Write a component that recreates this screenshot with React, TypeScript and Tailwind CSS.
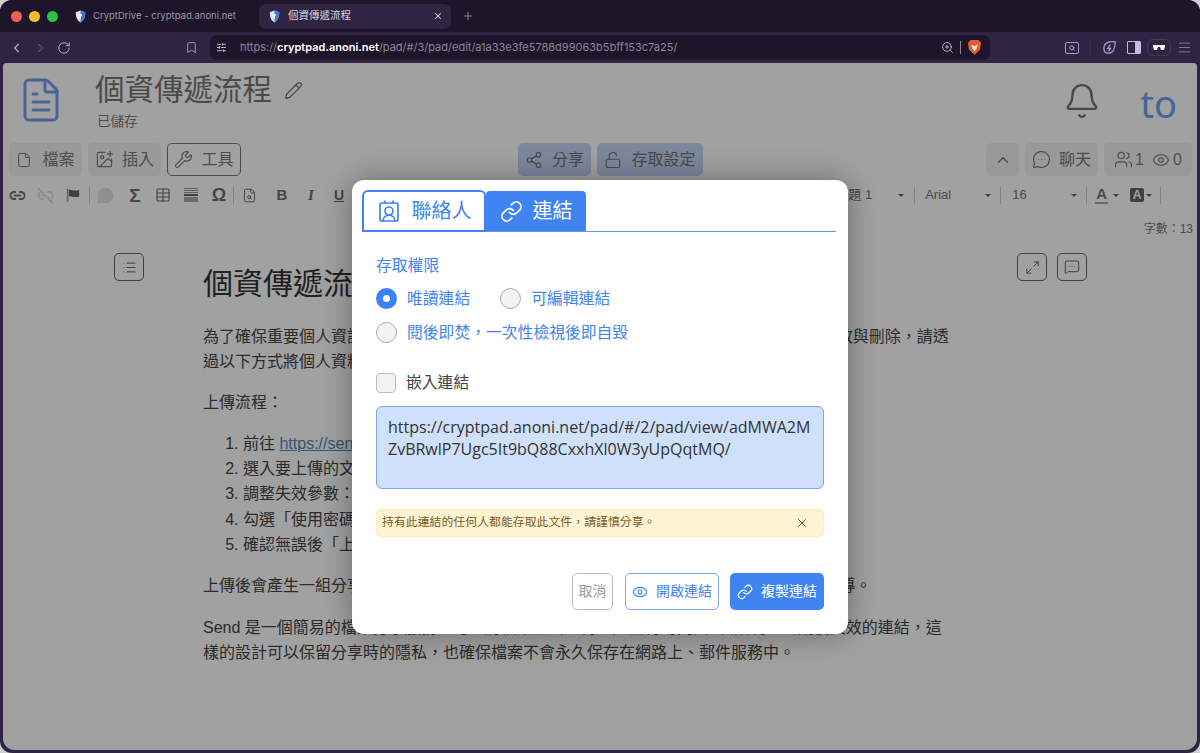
import React from "react";
import {
  ChevronLeft, ChevronRight, RotateCw, Bookmark, SlidersHorizontal, ZoomIn, X, Plus, Menu,
  FileText, Pencil, Bell, File, ImagePlus, Wrench, Share2, LockOpen, ChevronUp, MessageCircleMore,
  Users, Eye, List, Maximize2, MessageSquareMore, Link as LinkIcon, ContactRound, Link2, Link2Off,
  MessageCircle, Table, FileSearch, Search,
} from "lucide-react";

function Shield({ className }: { className?: string }) {
  return (
    <svg viewBox="0 0 14 16" className={className}>
      <path d="M7 0.5 L13 2.5 C13 8 12 12.5 7 15.5 C2 12.5 1 8 1 2.5 Z" fill="#dbe7fb" />
      <path d="M7 0.5 L13 2.5 C13 8 12 12.5 7 15.5 Z" fill="#3f78d8" />
      <circle cx="7" cy="6.5" r="1.6" fill="#fff" />
      <rect x="6.3" y="7" width="1.4" height="4" fill="#fff" />
    </svg>
  );
}

function Brave() {
  return (
    <svg viewBox="0 0 16 18" className="w-[15px] h-[17px]">
      <path d="M4 1 L12 1 L15 4 L14 11 L8 17 L2 11 L1 4 Z" fill="#e2602f" />
      <path d="M4.5 6 L8 7.5 L11.5 6 L10 10.5 L8 13 L6 10.5 Z" fill="#f7e8df" />
    </svg>
  );
}

function ToolBtn({ children, outline, w }: { children: React.ReactNode; outline?: boolean; w: string }) {
  return (
    <div
      className={
        "h-[33px] flex items-center justify-center gap-[8px] rounded-[5px] text-[16px] text-[#7a7a7a] " +
        w +
        " " +
        (outline ? "border border-[#777] bg-transparent" : "bg-[#f3f3f3]")
      }
    >
      {children}
    </div>
  );
}

function BlueBtn({ children, w }: { children: React.ReactNode; w: string }) {
  return (
    <div className={"h-[33px] flex items-center justify-center gap-[9px] rounded-[5px] text-[16px] text-[#757575] bg-[#c6d8f8] " + w}>
      {children}
    </div>
  );
}

function Cell({ children, w = "w-[28px]" }: { children: React.ReactNode; w?: string }) {
  return <div className={"flex justify-center items-center shrink-0 " + w}>{children}</div>;
}

function Sep() {
  return <div className="w-px h-[17px] bg-[#d0d0d0] shrink-0" />;
}

function Caret() {
  return <div className="w-0 h-0 border-x-[3px] border-x-transparent border-t-[3px] border-t-[#666]" />;
}

function Radio({ checked }: { checked?: boolean }) {
  return checked ? (
    <div className="w-[21px] h-[21px] rounded-full bg-[#3b82f6] flex items-center justify-center shrink-0">
      <div className="w-[7px] h-[7px] rounded-full bg-white" />
    </div>
  ) : (
    <div className="w-[21px] h-[21px] rounded-full bg-[#f3f3f3] border border-[#aaa] shrink-0" />
  );
}

export default function App() {
  return (
    <div className="w-[1200px] h-[753px] bg-[#cfcfcf] font-['Liberation_Sans','Noto_Sans_CJK_TC',sans-serif]">
      <div className="w-full h-full rounded-[12px] overflow-hidden bg-[#2f2542] flex flex-col">
        {/* Tab strip */}
        <div className="h-[32px] bg-[#1e152b] flex items-center font-['Inter','Noto_Sans_CJK_TC',sans-serif] shrink-0">
          <div className="flex items-center gap-[7px] pl-[11px] w-[75px]">
            <div className="w-[11px] h-[11px] rounded-full bg-[#ee5f57]" />
            <div className="w-[11px] h-[11px] rounded-full bg-[#f6bd2e]" />
            <div className="w-[11px] h-[11px] rounded-full bg-[#29c13f]" />
          </div>
          <div className="flex items-center gap-[7px] w-[184px]">
            <Shield className="w-[11px] h-[13px]" />
            <span className="text-[9.5px] text-[#9d94ad] whitespace-nowrap">CryptDrive - cryptpad.anoni.net</span>
          </div>
          <div className="w-[192px] h-[25px] rounded-[7px] bg-[#2f2542] flex items-center pl-[10px] pr-[8px] gap-[8px]">
            <Shield className="w-[11px] h-[13px]" />
            <span className="text-[10.5px] text-[#d8d3df] flex-1">個資傳遞流程</span>
            <X className="w-[10px] h-[10px] text-[#d8d3df]" strokeWidth={2.5} />
          </div>
          <Plus className="w-[12px] h-[12px] ml-[11px] text-[#8d8399]" />
        </div>

        {/* Address bar */}
        <div className="h-[31px] flex items-center shrink-0 font-['Inter',sans-serif]">
          <div className="flex items-center gap-[9px] pl-[9px] w-[210px]">
            <ChevronLeft className="w-[15px] h-[18px] text-[#b7b0c2]" strokeWidth={1.8} />
            <ChevronRight className="w-[15px] h-[18px] text-[#5d5470]" strokeWidth={1.8} />
            <RotateCw className="w-[14px] h-[14px] text-[#b7b0c2]" strokeWidth={1.6} />
            <Bookmark className="w-[13px] h-[15px] text-[#b7b0c2] ml-[105px]" strokeWidth={1.5} />
          </div>
          <div className="w-[780px] h-[25px] rounded-[7px] bg-[#1e152b] flex items-center pl-[6px] pr-[8px]">
            <SlidersHorizontal className="w-[11px] h-[11px] text-[#c9c3d3]" />
            <span className="ml-[13px] text-[11px] text-[#8d8399] whitespace-nowrap flex-1">
              https://<span className="text-white font-semibold">cryptpad.anoni.net</span>/pad/#/3/pad/edit/a1a33e3fe5788d99063b5bff153c7a25/
            </span>
            <ZoomIn className="w-[13px] h-[13px] text-[#c9c3d3]" strokeWidth={1.6} />
            <div className="w-px h-[13px] bg-[#8d8399] mx-[6px]" />
            <Brave />
          </div>
          <div className="flex items-center flex-1">
            <div className="ml-[75px] w-[14px] h-[12px] rounded-[2px] border border-[#a99bd0] flex items-center justify-center">
              <Search className="w-[6px] h-[6px] text-[#cfc6e6]" strokeWidth={3} />
            </div>
            <div className="w-px h-[14px] bg-[#3d3354] ml-[11px]" />
            <svg viewBox="0 0 16 16" className="w-[15px] h-[15px] ml-[11px]" fill="none" stroke="#a99bd0" strokeWidth="1.4">
              <path d="M14 2 C8 1 2 3 2 9 C2 12 4 14 7 14 C12 14 14 8 14 2 Z" />
              <path d="M9 5 L6 9 H9 L7 12" />
            </svg>
            <div className="ml-[10px] w-[14px] h-[13px] border border-[#c5b9e6] rounded-[1px] flex justify-end">
              <div className="w-[5px] h-full bg-[#c5b9e6]" />
            </div>
            <div className="ml-[6px] w-[24px] h-[17px] rounded-[6px] border border-[#453a5e] flex items-center justify-center">
              <svg viewBox="0 0 12 6" className="w-[12px] h-[6px]" fill="#fff">
                <path d="M0 0 H12 V1.5 L11 5 H8 L7 2 H5 L4 5 H1 L0 1.5 Z" />
              </svg>
            </div>
            <Menu className="w-[15px] h-[15px] ml-[6px] text-[#8d82a6]" strokeWidth={1.4} />
          </div>
        </div>

        {/* Page */}
        <div className="relative flex-1 mx-[3px] mb-[3px] rounded-t-[4px] rounded-b-[12px] overflow-hidden bg-white flex flex-col">
          {/* Header */}
          <div className="h-[80px] flex shrink-0 relative">
            <div className="w-[92px] pl-[14px] pt-[12px]">
              <FileText className="w-[48px] h-[50px] text-[#72a0ec]" strokeWidth={1.5} />
            </div>
            <div className="flex-1 flex flex-col pt-[8px]">
              <div className="flex items-center h-[38px] text-[29.5px] text-[#767676]">
                個資傳遞流程
                <Pencil className="w-[19px] h-[19px] ml-[12px] text-[#757575]" strokeWidth={1.6} />
              </div>
              <div className="ml-[2px] mt-[3px] text-[13.5px] leading-[20px] text-[#7d7d7d]">已儲存</div>
            </div>
            <div className="flex items-start pt-[15px] pr-[20px] gap-[39px]">
              <Bell className="w-[38px] h-[40px] mt-[3px] text-[#737373]" strokeWidth={1.5} />
              <span className="text-[38px] leading-[50px] text-[#72a0ec] font-['Noto_Sans',sans-serif]">to</span>
            </div>
          </div>

          {/* Main toolbar */}
          <div className="h-[33px] flex items-center px-[6px] shrink-0">
            <div className="flex gap-[6px]">
              <ToolBtn w="w-[73px]"><File className="w-[16px] h-[20px]" strokeWidth={1.5} /><span className="ml-[2px]">檔案</span></ToolBtn>
              <ToolBtn w="w-[73px]"><ImagePlus className="w-[19px] h-[19px]" strokeWidth={1.5} />插入</ToolBtn>
              <ToolBtn outline w="w-[74px]"><Wrench className="w-[19px] h-[19px]" strokeWidth={1.5} />工具</ToolBtn>
            </div>
            <div className="flex gap-[6px] ml-[277px]">
              <BlueBtn w="w-[73px]"><Share2 className="w-[18px] h-[18px]" strokeWidth={1.6} />分享</BlueBtn>
              <BlueBtn w="w-[106px]"><LockOpen className="w-[18px] h-[18px]" strokeWidth={1.6} />存取設定</BlueBtn>
            </div>
            <div className="flex gap-[6px] ml-auto -mr-[1px]">
              <ToolBtn w="w-[33px]"><ChevronUp className="w-[18px] h-[18px]" strokeWidth={2} /></ToolBtn>
              <ToolBtn w="w-[73px]"><MessageCircleMore className="w-[19px] h-[19px]" strokeWidth={1.5} />聊天</ToolBtn>
              <ToolBtn w="w-[88px]">
                <span className="flex items-center gap-[2px]"><Users className="w-[19px] h-[19px]" strokeWidth={1.5} />1</span>
                <span className="flex items-center gap-[3px]"><Eye className="w-[18px] h-[18px]" strokeWidth={1.5} />0</span>
              </ToolBtn>
            </div>
          </div>

          {/* Editor toolbar */}
          <div className="h-[38px] flex items-center justify-between shrink-0 text-[#707070]">
            <div className="flex items-center">
              <Cell><Link2 className="w-[17px] h-[17px]" strokeWidth={2.6} /></Cell>
              <Cell><Link2Off className="w-[17px] h-[17px] text-[#dcdcdc]" strokeWidth={2.4} /></Cell>
              <Cell>
                <svg viewBox="0 0 16 16" className="w-[15px] h-[15px]" fill="#666">
                  <rect x="1" y="1" width="1.5" height="14" fill="#999" />
                  <path d="M3 2 C6 1 8 4 14 2 V9 C8 11 6 8 3 9 Z" />
                </svg>
              </Cell>
              <div className="w-[2px]" />
              <Sep />
              <Cell w="w-[31px]"><MessageCircle className="w-[17px] h-[17px] text-[#e2e2e2]" fill="#e2e2e2" /></Cell>
              <Cell><span className="text-[19px] font-bold leading-none">Σ</span></Cell>
              <Cell><Table className="w-[16px] h-[16px]" strokeWidth={1.8} /></Cell>
              <Cell>
                <div className="w-[14px] flex flex-col gap-[1px]">
                  <div className="h-[1px] bg-[#999]" />
                  <div className="h-[1px] bg-[#999]" />
                  <div className="h-[1px] bg-[#999]" />
                  <div className="h-[2px] bg-[#666]" />
                  <div className="h-[5px] bg-[#aaa]" />
                </div>
              </Cell>
              <Cell><span className="text-[18px] font-bold leading-none">Ω</span></Cell>
              <Sep />
              <Cell w="w-[31px]"><FileSearch className="w-[15px] h-[15px]" strokeWidth={1.6} /></Cell>
              <Cell w="w-[34px]"><span className="text-[15px] font-bold">B</span></Cell>
              <Cell w="w-[24px]"><span className="text-[15px] font-bold italic font-['Liberation_Serif',serif]">I</span></Cell>
              <Cell w="w-[32px]"><span className="text-[14px] font-bold underline">U</span></Cell>
            </div>
            <div className="flex items-center text-[13px] text-[#757575]">
              <span className="whitespace-nowrap">標題 1</span>
              <div className="ml-[26px] mr-[10px]"><Caret /></div>
              <Sep />
              <span className="ml-[10px] w-[60px]">Arial</span>
              <Caret />
              <div className="ml-[9px]"><Sep /></div>
              <span className="ml-[11px] w-[59px]">16</span>
              <Caret />
              <div className="ml-[9px]"><Sep /></div>
              <span className="ml-[8px] font-bold text-[15px] border-b-2 border-[#aaa] leading-[16px] px-[1px]">A</span>
              <div className="ml-[5px]"><Caret /></div>
              <span className="ml-[11px] w-[14px] h-[14px] rounded-[2px] bg-[#666] text-white text-[12px] font-bold flex items-center justify-center">A</span>
              <div className="ml-[2px]"><Caret /></div>
              <div className="ml-[8px] mr-[36px]"><Sep /></div>
            </div>
          </div>

          {/* Word count */}
          <div className="h-[16px] mt-[7px] text-right pr-[4px] text-[12px] leading-[16px] text-[#7a7a7a] shrink-0">字數：13</div>

          {/* Document */}
          <div className="flex items-start pl-[111px] pt-[16px]">
            <div className="w-[30px] h-[28px] rounded-[5px] border border-[#666] flex items-center justify-center shrink-0">
              <List className="w-[15px] h-[15px] text-[#666]" strokeWidth={1.6} />
            </div>
            <div className="ml-[59px] w-[745px] shrink-0 text-[16px] leading-[25.3px] text-[#444] whitespace-nowrap">
              <h1 className="text-[30px] leading-[40px] text-[#333] mb-[20px] mt-[11px]">個資傳遞流程</h1>
              <p className="mb-[15px]">
                為了確保重要個人資訊在傳遞過程中的安全，文件傳送doc後應設定期限，於到期後自動失效與刪除，請透<br />
                過以下方式將個人資料加密後上傳，再分享給對方。
              </p>
              <p className="mb-[16px]">上傳流程：</p>
              <ol className="list-decimal pl-[40px] mb-[16px]">
                <li>前往 <span className="text-[#4f86c0] underline">https://send.example</span></li>
                <li>選入要上傳的文件</li>
                <li>調整失效參數：下載次數與時間</li>
                <li>勾選「使用密碼保護」</li>
                <li>確認無誤後「上傳」</li>
              </ol>
              <p className="mb-[16px]">上傳後會產生一組分享連結與密碼，請將連結與密碼透過 LINE 等管道分別傳給對方，並引導。</p>
              <p>
                Send 是一個簡易的檔案分享服務，可以將檔案加密上傳並產生有時間與3次限制、到期後失效的連結，這<br />
                樣的設計可以保留分享時的隱私，也確保檔案不會永久保存在網路上、郵件服務中。
              </p>
            </div>
            <div className="ml-[69px] flex gap-[10px]">
              <div className="w-[30px] h-[28px] rounded-[5px] border border-[#666] flex items-center justify-center">
                <Maximize2 className="w-[15px] h-[15px] text-[#666]" strokeWidth={1.6} />
              </div>
              <div className="w-[30px] h-[28px] rounded-[5px] border border-[#666] flex items-center justify-center">
                <MessageSquareMore className="w-[16px] h-[16px] text-[#666]" strokeWidth={1.5} />
              </div>
            </div>
          </div>

          {/* Backdrop */}
          <div className="absolute inset-0 bg-black/37" />

          {/* Modal */}
          <div className="absolute left-[349px] top-[117px] w-[496px] h-[454px] bg-white rounded-[12px] shadow-[0_0_30px_rgba(0,0,0,0.35)] px-[10px] pt-[10px] flex flex-col">
            <div className="flex items-end h-[42px] border-b border-[#5f9ae6] mr-[2px] shrink-0">
              <div className="w-[124px] h-[42px] border-2 border-[#3f84f0] rounded-t-[6px] bg-white flex items-center justify-center gap-[11px] text-[20px] text-[#3f84f0] -mb-px">
                <ContactRound className="w-[24px] h-[24px]" strokeWidth={1.7} />
                聯絡人
              </div>
              <div className="w-[100px] h-[40px] bg-[#3f84f0] rounded-t-[4px] flex items-center justify-center gap-[10px] text-[20px] text-white">
                <LinkIcon className="w-[23px] h-[23px]" strokeWidth={1.8} />
                連結
              </div>
            </div>

            <div className="px-[14px] flex flex-col flex-1">
              <div className="mt-[24px] text-[15.8px] leading-[20px] text-[#3f84f0]">存取權限</div>
              <div className="mt-[12px] flex items-center text-[15.8px] leading-[21px] text-[#3f84f0]">
                <Radio checked />
                <span className="ml-[10px]">唯讀連結</span>
                <div className="ml-[30px]"><Radio /></div>
                <span className="ml-[10px]">可編輯連結</span>
              </div>
              <div className="mt-[13px] flex items-center text-[15.8px] leading-[21px] text-[#3f84f0]">
                <Radio />
                <span className="ml-[10px]">閱後即焚，一次性檢視後即自毀</span>
              </div>
              <div className="mt-[29px] flex items-center text-[15.8px] leading-[21px] text-[#444]">
                <div className="w-[20px] h-[20px] rounded-[4px] bg-[#f3f3f3] border border-[#bbb]" />
                <span className="ml-[10px]">嵌入連結</span>
              </div>
              <div className="mt-[13px] h-[83px] rounded-[6px] bg-[#cfe0fb] border border-[#7ba6e8] pl-[11px] pr-[9px] pt-[9px] text-[16px] leading-[22px] text-[#333] break-all font-['Open_Sans',sans-serif]">
                https://cryptpad.anoni.net/pad/#/2/pad/view/adMWA2MZvBRwlP7Ugc5It9bQ88CxxhXl0W3yUpQqtMQ/
              </div>
              <div className="mt-[20px] h-[28px] rounded-[4px] bg-[#fdf3d3] border border-[#fbeec3] flex items-center pl-[5px] pr-[14px] text-[11.9px] text-[#7a5f1e]">
                <span className="flex-1">持有此連結的任何人都能存取此文件，請謹慎分享。</span>
                <X className="w-[14px] h-[14px] text-[#5f5030]" strokeWidth={1.6} />
              </div>
              <div className="mt-[36px] flex justify-end gap-[11px] text-[14px]">
                <div className="w-[41px] h-[37px] mr-[1px] rounded-[5px] border border-[#bbb] text-[#999] flex items-center justify-center">取消</div>
                <div className="w-[94px] h-[37px] rounded-[5px] border border-[#7ba6e8] text-[#3f84f0] flex items-center justify-center gap-[8px]">
                  <Eye className="w-[16px] h-[16px]" strokeWidth={1.7} />
                  開啟連結
                </div>
                <div className="w-[94px] h-[37px] rounded-[5px] bg-[#3f84f0] text-white flex items-center justify-center gap-[8px]">
                  <LinkIcon className="w-[16px] h-[16px]" strokeWidth={1.8} />
                  複製連結
                </div>
              </div>
            </div>
          </div>
        </div>
      </div>
    </div>
  );
}
